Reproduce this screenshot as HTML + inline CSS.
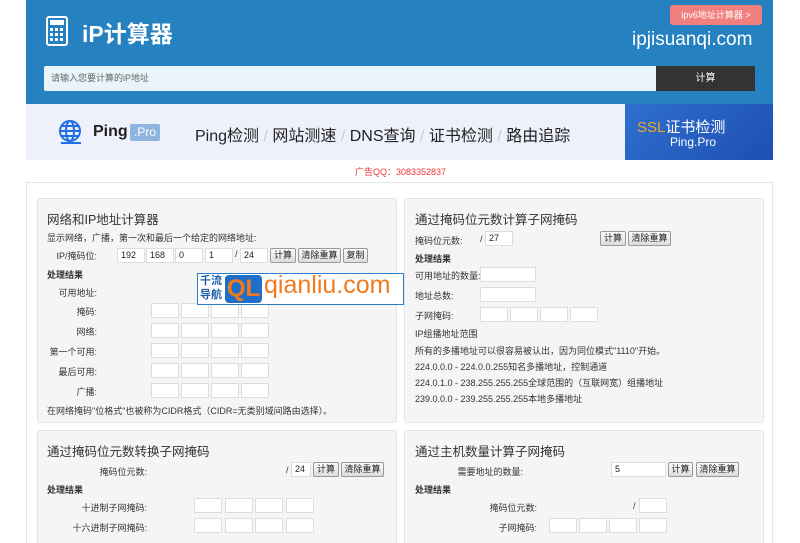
<!DOCTYPE html>
<html><head><meta charset="utf-8"><style>
*{margin:0;padding:0;box-sizing:border-box}
html,body{width:800px;height:543px;overflow:hidden}
body{background:#fff;font-family:"Liberation Sans","Noto Sans CJK SC",sans-serif;font-size:9px;color:#333;position:relative}
.a{position:absolute;white-space:nowrap}
.in{position:absolute;background:#fff;border:1px solid #ddd;height:15px;font-size:9px;line-height:13px;padding-left:3px;color:#222}
.bt{position:absolute;height:15px;border:1px solid #999;border-radius:2px;background:linear-gradient(#fafafa,#ddd);font-size:9px;line-height:13px;text-align:center;color:#222}
.pn{position:absolute;background:#f5f5f5;border:1px solid #e3e3e3;border-radius:3px}
.t{font-size:12.5px;color:#333}
.r{text-align:right}
.b{font-weight:bold}
</style></head><body>
<div class="a" style="left:26px;top:0;width:747px;height:104px;background:#2581c0"></div>
<svg class="a" style="left:46px;top:16px" width="22" height="30" viewBox="0 0 22 30"><rect x="1" y="1" width="20" height="28" rx="2" fill="none" stroke="#fff" stroke-width="2"/><rect x="4" y="4" width="14" height="5" fill="#fff"/><g fill="#fff"><rect x="4" y="12" width="3" height="3"/><rect x="9" y="12" width="3" height="3"/><rect x="14" y="12" width="3" height="3"/><rect x="4" y="17" width="3" height="3"/><rect x="9" y="17" width="3" height="3"/><rect x="14" y="17" width="3" height="3"/><rect x="4" y="22" width="3" height="3"/><rect x="9" y="22" width="3" height="3"/><rect x="14" y="22" width="3" height="3"/></g></svg>
<div class="a" style="left:82px;top:15px;color:#fff;font-size:23px;font-weight:bold">iP计算器</div>
<div class="a" style="left:670px;top:5px;width:92px;height:20px;background:#f07f7d;border-radius:3px;color:#fff;font-size:9px;line-height:20px;text-align:center">ipv6地址计算器 &gt;</div>
<div class="a" style="left:632px;top:29px;color:#fff;font-size:19px">ipjisuanqi.com</div>
<div class="a" style="left:44px;top:66px;width:612px;height:25px;background:#e8f4fa;border-radius:2px 0 0 2px;color:#666;font-size:9px;line-height:25px;padding-left:7px">请输入您要计算的iP地址</div>
<div class="a" style="left:656px;top:66px;width:99px;height:25px;background:#333;color:#fff;font-size:10px;line-height:25px;text-align:center">计算</div>
<div class="a" style="left:26px;top:104px;width:599px;height:56px;background:#eef1fb"></div>
<svg class="a" style="left:57px;top:119px" width="26" height="26" viewBox="0 0 26 26" fill="none" stroke="#1f6fe8" stroke-width="2"><circle cx="13" cy="12" r="10"/><ellipse cx="13" cy="12" rx="4" ry="10"/><line x1="3" y1="12" x2="23" y2="12"/><line x1="5" y1="7" x2="21" y2="7"/><line x1="5" y1="17" x2="21" y2="17"/><line x1="4" y1="24" x2="24" y2="24"/></svg>
<div class="a" style="left:93px;top:123px;font-size:16px;font-weight:bold;color:#222">Ping</div>
<div class="a" style="left:130px;top:124px;width:30px;height:17px;background:#8fb4e0;border-radius:2px;color:#fff;font-size:12px;line-height:17px;text-align:center">.Pro</div>
<div class="a" style="left:195px;top:122px;font-size:16px;color:#222">Ping检测 <span style="color:#ccc">/</span> 网站测速 <span style="color:#ccc">/</span> DNS查询 <span style="color:#ccc">/</span> 证书检测 <span style="color:#ccc">/</span> 路由追踪</div>
<div class="a" style="left:625px;top:104px;width:148px;height:56px;background:linear-gradient(135deg,#2f6fd0,#1e50b0)"></div>
<div class="a" style="left:637px;top:116px;font-size:15px;color:#fff"><span style="color:#f5a623">SSL</span>证书检测</div>
<div class="a" style="left:670px;top:135px;font-size:12px;color:#fff">Ping.Pro</div>
<div class="a" style="left:355px;top:165px;color:#e33;font-size:9px">广告QQ：3083352837</div>
<div class="a" style="left:26px;top:182px;width:747px;height:370px;border:1px solid #e5e5e5"></div>

<div class="pn" style="left:37px;top:198px;width:360px;height:225px"></div>
<div class="a t" style="left:47px;top:209px">网络和IP地址计算器</div>
<div class="a" style="left:47px;top:231px">显示网络，广播，第一次和最后一个给定的网络地址:</div>
<div class="a r" style="left:40px;top:249px;width:57px">IP/掩码位:</div>
<div class="in" style="left:117px;top:248px;width:28px">192</div>
<div class="in" style="left:146px;top:248px;width:28px">168</div>
<div class="in" style="left:175px;top:248px;width:28px">0</div>
<div class="in" style="left:205px;top:248px;width:28px">1</div>
<div class="a" style="left:235px;top:249px">/</div>
<div class="in" style="left:240px;top:248px;width:28px">24</div>
<div class="bt" style="left:270px;top:248px;width:26px">计算</div>
<div class="bt" style="left:298px;top:248px;width:43px">清除重算</div>
<div class="bt" style="left:343px;top:248px;width:25px">复制</div>
<div class="a b" style="left:47px;top:268px">处理结果</div>
<div class="a r" style="left:40px;top:286px;width:57px">可用地址:</div>
<div class="a r" style="left:40px;top:305px;width:57px">掩码:</div>
<div class="a r" style="left:40px;top:325px;width:57px">网络:</div>
<div class="a r" style="left:40px;top:345px;width:57px">第一个可用:</div>
<div class="a r" style="left:40px;top:365px;width:57px">最后可用:</div>
<div class="a r" style="left:40px;top:385px;width:57px">广播:</div>
<div class="in" style="left:151px;top:303px;width:28px"></div><div class="in" style="left:181px;top:303px;width:28px"></div><div class="in" style="left:211px;top:303px;width:28px"></div><div class="in" style="left:241px;top:303px;width:28px"></div>
<div class="in" style="left:151px;top:323px;width:28px"></div><div class="in" style="left:181px;top:323px;width:28px"></div><div class="in" style="left:211px;top:323px;width:28px"></div><div class="in" style="left:241px;top:323px;width:28px"></div>
<div class="in" style="left:151px;top:343px;width:28px"></div><div class="in" style="left:181px;top:343px;width:28px"></div><div class="in" style="left:211px;top:343px;width:28px"></div><div class="in" style="left:241px;top:343px;width:28px"></div>
<div class="in" style="left:151px;top:363px;width:28px"></div><div class="in" style="left:181px;top:363px;width:28px"></div><div class="in" style="left:211px;top:363px;width:28px"></div><div class="in" style="left:241px;top:363px;width:28px"></div>
<div class="in" style="left:151px;top:383px;width:28px"></div><div class="in" style="left:181px;top:383px;width:28px"></div><div class="in" style="left:211px;top:383px;width:28px"></div><div class="in" style="left:241px;top:383px;width:28px"></div>
<div class="a" style="left:47px;top:404px">在网络掩码"位格式"也被称为CIDR格式（CIDR=无类别域间路由选择）。</div>

<div class="a" style="left:197px;top:273px;width:207px;height:32px;background:#fff;border:1px solid #2a7cc7"></div>
<div class="a" style="left:200px;top:274px;font-size:11px;line-height:14px;color:#1a5fa8;font-weight:bold">千流<br>导航</div>
<div class="a" style="left:225px;top:275px;width:37px;height:28px;background:#1f6fc8;border-radius:4px;color:#f07a1c;font-size:24px;font-weight:bold;line-height:28px;text-align:center">QL</div>
<div class="a" style="left:264px;top:271px;font-size:25px;color:#f07a1c">qianliu.com</div>

<div class="pn" style="left:404px;top:198px;width:360px;height:225px"></div>
<div class="a t" style="left:415px;top:209px">通过掩码位元数计算子网掩码</div>
<div class="a" style="left:415px;top:234px">掩码位元数:</div>
<div class="a" style="left:480px;top:234px">/</div>
<div class="in" style="left:485px;top:231px;width:28px">27</div>
<div class="bt" style="left:600px;top:231px;width:26px">计算</div>
<div class="bt" style="left:628px;top:231px;width:43px">清除重算</div>
<div class="a b" style="left:415px;top:252px">处理结果</div>
<div class="a" style="left:415px;top:269px">可用地址的数量:</div>
<div class="in" style="left:480px;top:267px;width:56px"></div>
<div class="a" style="left:415px;top:289px">地址总数:</div>
<div class="in" style="left:480px;top:287px;width:56px"></div>
<div class="a" style="left:415px;top:309px">子网掩码:</div>
<div class="in" style="left:480px;top:307px;width:28px"></div><div class="in" style="left:510px;top:307px;width:28px"></div><div class="in" style="left:540px;top:307px;width:28px"></div><div class="in" style="left:570px;top:307px;width:28px"></div>
<div class="a" style="left:415px;top:327px">IP组播地址范围</div>
<div class="a" style="left:415px;top:344px">所有的多播地址可以很容易被认出，因为同位模式"1110"开始。</div>
<div class="a" style="left:415px;top:360px">224.0.0.0 - 224.0.0.255知名多播地址，控制通道</div>
<div class="a" style="left:415px;top:376px">224.0.1.0 - 238.255.255.255全球范围的（互联网宽）组播地址</div>
<div class="a" style="left:415px;top:392px">239.0.0.0 - 239.255.255.255本地多播地址</div>

<div class="pn" style="left:37px;top:430px;width:360px;height:130px"></div>
<div class="a t" style="left:47px;top:441px">通过掩码位元数转换子网掩码</div>
<div class="a r" style="left:47px;top:465px;width:100px">掩码位元数:</div>
<div class="a" style="left:286px;top:465px">/</div>
<div class="in" style="left:291px;top:462px;width:20px">24</div>
<div class="bt" style="left:313px;top:462px;width:26px">计算</div>
<div class="bt" style="left:341px;top:462px;width:43px">清除重算</div>
<div class="a b" style="left:47px;top:483px">处理结果</div>
<div class="a r" style="left:47px;top:501px;width:100px">十进制子网掩码:</div>
<div class="a r" style="left:47px;top:521px;width:100px">十六进制子网掩码:</div>
<div class="in" style="left:194px;top:498px;width:28px"></div><div class="in" style="left:225px;top:498px;width:28px"></div><div class="in" style="left:255px;top:498px;width:28px"></div><div class="in" style="left:286px;top:498px;width:28px"></div>
<div class="in" style="left:194px;top:518px;width:28px"></div><div class="in" style="left:225px;top:518px;width:28px"></div><div class="in" style="left:255px;top:518px;width:28px"></div><div class="in" style="left:286px;top:518px;width:28px"></div>

<div class="pn" style="left:404px;top:430px;width:360px;height:130px"></div>
<div class="a t" style="left:415px;top:441px">通过主机数量计算子网掩码</div>
<div class="a r" style="left:415px;top:465px;width:108px">需要地址的数量:</div>
<div class="in" style="left:611px;top:462px;width:55px">5</div>
<div class="bt" style="left:668px;top:462px;width:25px">计算</div>
<div class="bt" style="left:696px;top:462px;width:43px">清除重算</div>
<div class="a b" style="left:415px;top:483px">处理结果</div>
<div class="a r" style="left:415px;top:501px;width:122px">掩码位元数:</div>
<div class="a" style="left:633px;top:501px">/</div>
<div class="in" style="left:639px;top:498px;width:28px"></div>
<div class="a r" style="left:415px;top:521px;width:122px">子网掩码:</div>
<div class="in" style="left:549px;top:518px;width:28px"></div><div class="in" style="left:579px;top:518px;width:28px"></div><div class="in" style="left:609px;top:518px;width:28px"></div><div class="in" style="left:639px;top:518px;width:28px"></div>
</body></html>
